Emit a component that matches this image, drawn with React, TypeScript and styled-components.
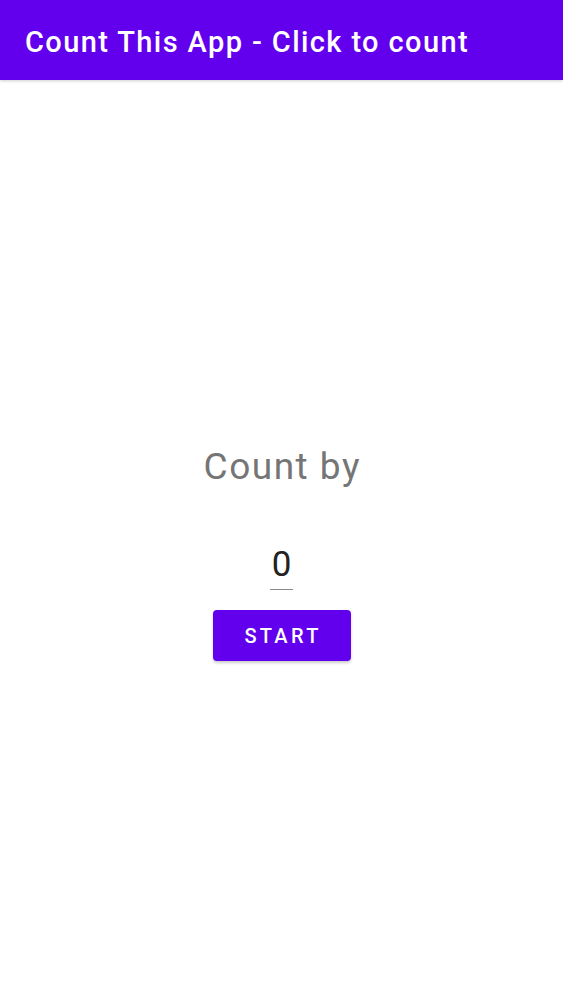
import styled, { createGlobalStyle } from 'styled-components'

const GlobalStyle = createGlobalStyle`
  html, body {
    margin: 0;
    padding: 0;
    background: #ffffff;
  }
  body {
    font-family: Roboto, "Noto Sans", "Liberation Sans", sans-serif;
  }
`

const App = () => {
  return (
    <Screen>
      <GlobalStyle />
      <AppBar>
        <AppTitle>Count This App - Click to count</AppTitle>
      </AppBar>
      <Content>
        <Label>Count by</Label>
        <CountInput>0</CountInput>
        <StartButton>START</StartButton>
      </Content>
    </Screen>
  )
}

export default App

const Screen = styled.div`
  width: 563px;
  height: 1000px;
  display: flex;
  flex-direction: column;
  background: #ffffff;
`

const AppBar = styled.header`
  height: 80px;
  flex-shrink: 0;
  display: flex;
  align-items: center;
  padding-left: 25px;
  background: #6200ee;
  box-shadow: 0 1px 3px rgba(0, 0, 0, 0.2);
`

const AppTitle = styled.h1`
  margin: 0;
  padding-top: 4px;
  font-size: 29px;
  font-weight: 500;
  letter-spacing: 1.4px;
  color: #ffffff;
  white-space: nowrap;
`

const Content = styled.main`
  display: flex;
  flex-direction: column;
  align-items: center;
  padding-top: 366px;
`

const Label = styled.div`
  font-size: 37px;
  letter-spacing: 1.5px;
  padding-left: 1.5px;
  color: #757575;
  line-height: 42px;
`

const CountInput = styled.div`
  margin-top: 57px;
  width: 23px;
  font-size: 35px;
  line-height: 40px;
  color: #222222;
  text-align: center;
  padding-bottom: 4px;
  border-bottom: 1px solid #8a8a8a;
`

const StartButton = styled.button`
  margin-top: 20px;
  width: 138px;
  height: 51px;
  padding: 0 0 0 3px;
  border: none;
  border-radius: 4px;
  background: #6200ee;
  color: #ffffff;
  font-family: Roboto, "Noto Sans", sans-serif;
  font-size: 20px;
  font-weight: 500;
  letter-spacing: 3.3px;
  box-shadow: 0 2px 3px rgba(0, 0, 0, 0.2);
`
